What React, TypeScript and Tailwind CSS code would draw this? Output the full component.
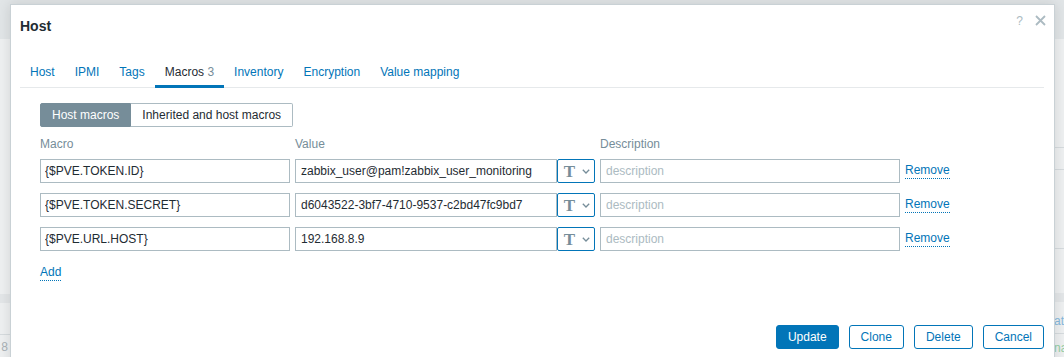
import React from 'react';

const macros = [
  { name: '{$PVE.TOKEN.ID}', value: 'zabbix_user@pam!zabbix_user_monitoring' },
  { name: '{$PVE.TOKEN.SECRET}', value: 'd6043522-3bf7-4710-9537-c2bd47fc9bd7' },
  { name: '{$PVE.URL.HOST}', value: '192.168.8.9' },
];

const tabs = [
  { label: 'Host' },
  { label: 'IPMI' },
  { label: 'Tags' },
  { label: 'Macros', count: 3, active: true },
  { label: 'Inventory' },
  { label: 'Encryption' },
  { label: 'Value mapping' },
];

function TypeButton() {
  return (
    <button className="w-[38px] h-[24px] border border-[#0275b8] rounded-[2px] bg-white flex items-center justify-center gap-[7px] pl-[2px]">
      <span className="font-['Liberation_Serif',serif] font-bold text-[17px] leading-none text-[#768d99]">T</span>
      <svg width="8" height="5" viewBox="0 0 8 5" fill="none">
        <path d="M0.8 0.8 L4 4 L7.2 0.8" stroke="#768d99" strokeWidth="1.3" />
      </svg>
    </button>
  );
}

function LinkText({ children }: { children: React.ReactNode }) {
  return (
    <span className="inline-block leading-[15px] text-[#0275b8] border-b border-dotted border-[#0275b8] cursor-pointer">
      {children}
    </span>
  );
}

export default function App() {
  return (
    <div className="relative w-[1064px] h-[357px] overflow-hidden bg-[#eef0f1] font-['Liberation_Sans',Arial,sans-serif] text-[12px] text-[#1f2c33]">
      {/* page behind the overlay */}
      <div className="h-[39px] bg-[#e1e5e7]" />
      <div className="flex h-[318px]">
        <div className="w-[10px] flex flex-col">
          <div className="h-[255px]" />
          <div className="h-[9px] bg-[#e3e6e8]" />
          <div className="h-[31px]" />
          <div className="h-px bg-[#d6dbde]" />
          <div className="mt-[6px] text-[12px] leading-[13px] text-[#aab2b7] whitespace-nowrap overflow-hidden flex justify-end pr-[2px]">
            8
          </div>
        </div>
        <div className="flex-1" />
        <div className="w-[10px] flex flex-col">
          <div className="h-[108px]" />
          <div className="h-px bg-[#d6dbde]" />
          <div className="h-[21px]" />
          <div className="h-px bg-[#d6dbde]" />
          <div className="h-[78px]" />
          <div className="h-px bg-[#d6dbde]" />
          <div className="h-[44px]" />
          <div className="h-[9px] bg-[#e3e6e8]" />
          <div className="h-[11px]" />
          <div className="leading-[16px] text-[#86b8dc] whitespace-nowrap overflow-hidden">at</div>
          <div className="h-px mt-[4px] bg-[#d6dbde]" />
          <div className="mt-[8px] leading-[13px] text-[#94cfa3] whitespace-nowrap overflow-hidden">na</div>
        </div>
      </div>

      {/* dialog */}
      <div className="absolute left-[10px] top-[4px] w-[1045px] h-[400px] bg-white border border-[#c9d1d5] shadow-[0_0_12px_rgba(0,0,0,0.12)] pl-[9px] pr-[10px] pt-[11px]">
        <div className="h-[20px] leading-[20px] text-[14px] font-bold text-[#1f2c33]">Host</div>
        <div className="absolute top-[8px] right-[8px] flex items-center gap-[12px] text-[#acbbc2]">
          <span className="text-[12px] leading-[12px] mt-[2px]">?</span>
          <svg width="11" height="11" viewBox="0 0 11 11">
            <path d="M1 1 L10 10 M10 1 L1 10" stroke="#acbbc2" strokeWidth="1.8" />
          </svg>
        </div>

        <ul className="mt-[21px] flex border-b border-[#e6e9eb]">
          {tabs.map((t) => (
            <li
              key={t.label}
              className={
                t.active
                  ? '-mb-px px-[10px] pt-[8px] pb-[6px] leading-[14px] border-b-[3px] border-[#0275b8] text-[#1f2c33]'
                  : '-mb-px px-[10px] pt-[8px] pb-[6px] leading-[14px] border-b-[3px] border-transparent text-[#0275b8]'
              }
            >
              {t.label}
              {t.count !== undefined && <span className="text-[#768d99]"> {t.count}</span>}
            </li>
          ))}
        </ul>

        <div className="pl-[20px]">
          {/* radio switch */}
          <div className="mt-[15px] flex h-[24px] leading-[22px]">
            <div className="px-[11px] bg-[#768d99] border border-[#768d99] text-white rounded-l-[2px]">Host macros</div>
            <div className="px-[11px] border-y border-r border-[#acbbc2] rounded-r-[2px]">Inherited and host macros</div>
          </div>

          {/* column headers */}
          <div className="mt-[10px] flex gap-[5px] h-[14px] leading-[14px] text-[#768d99]">
            <div className="w-[250px]">Macro</div>
            <div className="w-[300px]">Value</div>
            <div className="w-[300px]">Description</div>
          </div>

          {/* rows */}
          <div className="mt-[8px] flex flex-col gap-[10px]">
            {macros.map((m) => (
              <div key={m.name} className="flex items-center gap-[5px] h-[24px]">
                <input
                  readOnly
                  value={m.name}
                  className="w-[250px] h-[24px] border border-[#acbbc2] px-[4px] text-[12px] text-[#1f2c33] outline-none"
                />
                <div className="flex w-[300px]">
                  <input
                    readOnly
                    value={m.value}
                    className="w-[262px] h-[24px] border border-[#acbbc2] px-[5px] text-[12px] text-[#1f2c33] outline-none"
                  />
                  <TypeButton />
                </div>
                <input
                  readOnly
                  placeholder="description"
                  className="w-[300px] h-[24px] border border-[#acbbc2] px-[5px] text-[12px] text-[#1f2c33] placeholder:text-[#acbbc2] outline-none"
                />
                <LinkText>Remove</LinkText>
              </div>
            ))}
          </div>

          <div className="mt-[12px]">
            <LinkText>Add</LinkText>
          </div>
        </div>

        {/* footer */}
        <div className="mt-[44px] flex justify-end gap-[10px]">
          <button className="h-[24px] px-[11px] rounded-[3px] border border-[#0275b8] bg-[#0275b8] text-white">Update</button>
          <button className="h-[24px] px-[11px] rounded-[3px] border border-[#0275b8] bg-white text-[#0275b8]">Clone</button>
          <button className="h-[24px] px-[11px] rounded-[3px] border border-[#0275b8] bg-white text-[#0275b8]">Delete</button>
          <button className="h-[24px] px-[11px] rounded-[3px] border border-[#0275b8] bg-white text-[#0275b8]">Cancel</button>
        </div>
      </div>
    </div>
  );
}
